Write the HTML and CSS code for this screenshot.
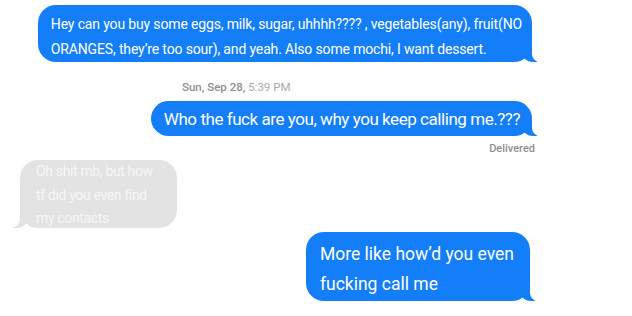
FILE: index.html
```html
<!DOCTYPE html>
<html lang="en">
<head>
    <meta charset="UTF-8">
    <meta name="viewport" content="width=device-width, initial-scale=1.0">
    <title>Messages</title>
    <link rel="stylesheet" href="styles.css">
</head>
<body>
    <div class="thread">
        <div class="bubble sent first">
            Hey can you buy some eggs, milk, sugar, uhhhh???? , vegetables(any), fruit(NO<br>
            ORANGES, they’re too sour), and yeah. Also some mochi, I want dessert.
        </div>

        <div class="timestamp"><span class="day">Sun, Sep 28,</span> <span class="time">5:39 PM</span></div>

        <div class="bubble sent single">Who the fuck are you, why you keep calling me.???</div>
        <div class="status">Delivered</div>

        <div class="bubble received">
            Oh shit mb, but how<br>
            tf did you even find<br>
            my contacts
        </div>

        <div class="bubble sent last">
            More like how’d you even<br>
            fucking call me
        </div>
    </div>
</body>
</html>
```

FILE: styles.css
```css
body {
    margin: 0;
    background: #fff;
    font-family: Roboto, "Noto Sans", sans-serif;
    width: 632px;
    height: 316px;
    overflow: hidden;
}

.thread {
    display: flex;
    flex-direction: column;
    padding: 5px 100px 0 20px;
}

.bubble {
    position: relative;
    border-radius: 18px;
    color: #fff;
    white-space: nowrap;
    box-sizing: border-box;
}

.bubble.sent {
    align-self: flex-end;
    background: #147ef8;
}

.bubble.first {
    font-size: 14px;
    letter-spacing: -0.15px;
    line-height: 25px;
    padding: 7px 10px 0 13px;
    height: 57px;
}

.bubble.single {
    font-size: 17px;
    letter-spacing: -0.45px;
    line-height: 34px;
    padding: 1px 12px 0 13px;
    margin-top: 7px;
}

.bubble.last {
    font-size: 17.5px;
    line-height: 30px;
    padding: 7px 16px 0 14px;
    margin: 4px 2px 0 0;
    height: 69px;
}

.bubble.received {
    align-self: flex-start;
    background: #e3e3e3;
    color: #f6f6f6;
    font-size: 14px;
    letter-spacing: -0.35px;
    line-height: 23.5px;
    padding: 0 24px 0 16px;
    margin-top: 5px;
    height: 68px;
}

/* tails */
.bubble.sent::before,
.bubble.received::before {
    content: "";
    position: absolute;
    bottom: 0;
    width: 16px;
    height: 16px;
}

.bubble.sent::before {
    right: -5px;
    background: #147ef8;
    border-bottom-left-radius: 12px;
}

.bubble.sent::after {
    content: "";
    position: absolute;
    bottom: 0;
    right: -10px;
    width: 10px;
    height: 17px;
    background: #fff;
    border-bottom-left-radius: 8px;
}

.bubble.received::before {
    left: -7px;
    background: #e3e3e3;
    border-bottom-right-radius: 12px;
}

.bubble.received::after {
    content: "";
    position: absolute;
    bottom: 0;
    left: -12px;
    width: 12px;
    height: 17px;
    background: #fff;
    border-bottom-right-radius: 9px;
}

.timestamp {
    align-self: flex-start;
    font-size: 11.5px;
    line-height: 13px;
    margin: 19px 0 0 162px;
    color: #8e8e93;
}

.timestamp .day {
    font-weight: 500;
}

.timestamp .time {
    color: #a9a9ae;
}

.status {
    align-self: flex-end;
    font-size: 11px;
    line-height: 13px;
    font-weight: 500;
    color: #8e8e93;
    margin: 6px -3px 0 0;
}
```
